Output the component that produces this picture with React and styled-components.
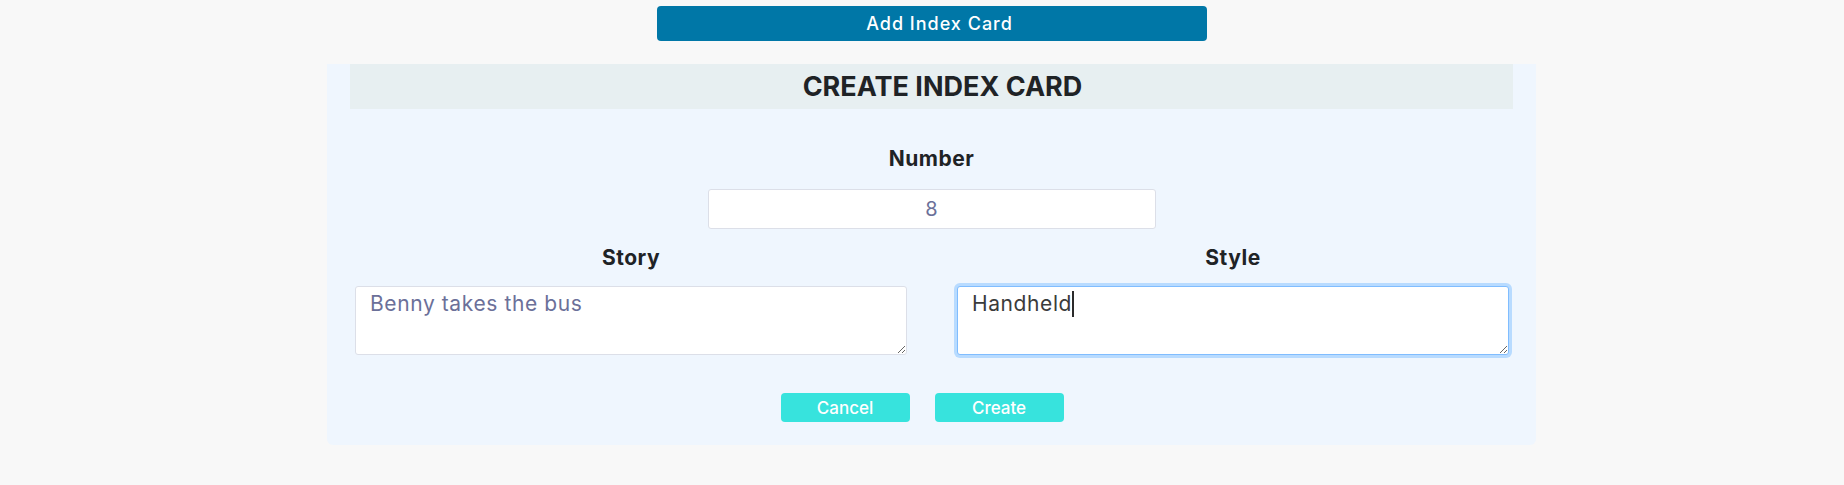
import React, { useLayoutEffect, useState } from "react";
import styled, { createGlobalStyle } from "styled-components";

const FONT = `Inter, "Noto Sans", "Liberation Sans", sans-serif`;

const GlobalStyle = createGlobalStyle`
  body {
    margin: 0;
    background: #f8f8f8;
    font-family: ${FONT};
    color: #212529;
  }
`;

const Page = styled.div`
  display: flex;
  flex-direction: column;
  align-items: center;
  padding: 6px 0 0 19px;
`;

const AddButton = styled.button`
  width: 550px;
  height: 35px;
  padding: 0 0 0 16px;
  border: none;
  border-radius: 4px;
  background: #0077a7;
  color: #fff;
  font-family: inherit;
  font-size: 18px;
  font-weight: 500;
  letter-spacing: 1px;
  margin-bottom: 23px;
  cursor: pointer;
`;

const Card = styled.div`
  width: 1209px;
  background: #eff6fe;
  border-radius: 0 0 6px 6px;
  display: flex;
  flex-direction: column;
  align-items: center;
  padding-bottom: 23px;
`;

const CardHeader = styled.div`
  width: 1163px;
  height: 45px;
  background: #e7eff1;
  display: flex;
  align-items: center;
  justify-content: center;
`;

const Title = styled.h2`
  margin: 0;
  padding-left: 22px;
  font-size: 27px;
  font-weight: 700;
  color: #1f2326;
`;

const Label = styled.label`
  display: block;
  font-size: 21px;
  line-height: 24px;
  font-weight: 700;
  letter-spacing: 0.5px;
  color: #1f2326;
  text-align: center;
  margin: ${(p) => p.$top || 0}px 0 ${(p) => p.$bottom || 0}px;
`;

const NumberInput = styled.input`
  box-sizing: border-box;
  width: 448px;
  height: 40px;
  border: 1px solid #dcdfe8;
  border-radius: 3px;
  background: #fff;
  text-align: center;
  font-family: inherit;
  font-size: 20px;
  color: #6b7099;
  outline: none;
`;

const Row = styled.div`
  align-self: stretch;
  display: flex;
  gap: 50px;
  padding: 0 27px 0 28px;
  margin-top: 17px;
`;

const Column = styled.div`
  flex: 1;
  display: flex;
  flex-direction: column;
`;

const AreaWrap = styled.div`
  position: relative;
`;

const TextArea = styled.textarea`
  display: block;
  box-sizing: border-box;
  width: 100%;
  height: 69px;
  padding: 5px 14px;
  border: 1px solid ${(p) => (p.$active ? "#80bdff" : "#dcdfe8")};
  border-radius: 3px;
  box-shadow: ${(p) => (p.$active ? "0 0 0 3px #b8dbff" : "none")};
  background: #fff;
  font-family: inherit;
  font-size: 21px;
  line-height: 24px;
  letter-spacing: 0.6px;
  color: ${(p) => (p.$active ? "#3b3b3b" : "#6b7099")};
  outline: none;
  resize: vertical;
`;

const Caret = styled.span`
  position: absolute;
  top: 5px;
  width: 2px;
  height: 26px;
  background: #2b2b2b;
`;

const Actions = styled.div`
  display: flex;
  gap: 25px;
  margin-top: 38px;
  padding-right: 19px;
`;

const ActionButton = styled.button`
  width: 129px;
  height: 29px;
  border: none;
  border-radius: 4px;
  background: #37e3dd;
  color: #fff;
  font-family: inherit;
  font-size: 17px;
  font-weight: 500;
  cursor: pointer;
`;

function measure(text) {
  const ctx = document.createElement("canvas").getContext("2d");
  ctx.font = `21px ${FONT}`;
  return ctx.measureText(text).width + text.length * 0.6;
}

export default function App() {
  const styleValue = "Handheld";
  const [caretX, setCaretX] = useState(0);

  useLayoutEffect(() => {
    setCaretX(15 + measure(styleValue));
  }, []);

  return (
    <>
      <GlobalStyle />
      <Page>
        <AddButton>Add Index Card</AddButton>
        <Card>
          <CardHeader>
            <Title>CREATE INDEX CARD</Title>
          </CardHeader>
          <Label $top={38} $bottom={18}>Number</Label>
          <NumberInput type="text" defaultValue="8" readOnly />
          <Row>
            <Column>
              <Label $bottom={16}>Story</Label>
              <TextArea defaultValue="Benny takes the bus" />
            </Column>
            <Column>
              <Label $bottom={16}>Style</Label>
              <AreaWrap>
                <TextArea $active defaultValue={styleValue} />
                <Caret style={{ left: caretX }} />
              </AreaWrap>
            </Column>
          </Row>
          <Actions>
            <ActionButton>Cancel</ActionButton>
            <ActionButton>Create</ActionButton>
          </Actions>
        </Card>
      </Page>
    </>
  );
}
